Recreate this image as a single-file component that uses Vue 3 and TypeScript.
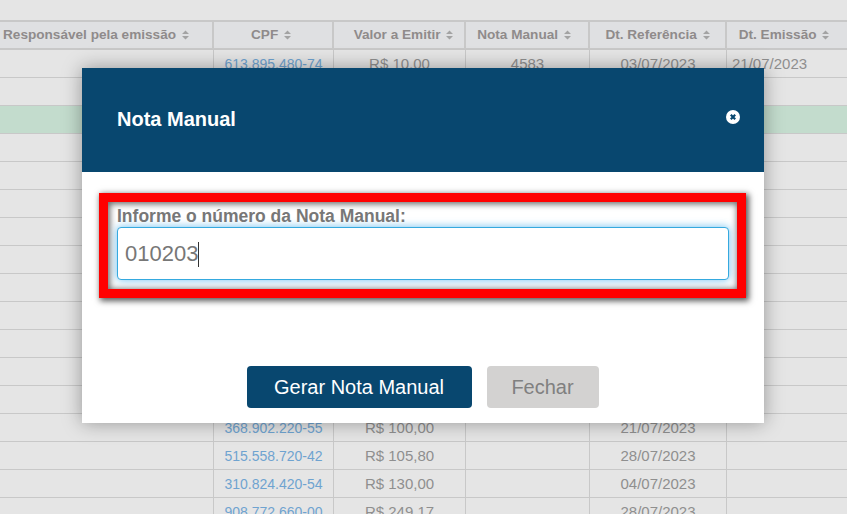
<script setup lang="ts">
interface Row {
  cpf: string
  valor: string
  nota: string
  ref: string
  emissao: string
  green?: boolean
}

const headers = ['Responsável pela emissão', 'CPF', 'Valor a Emitir', 'Nota Manual', 'Dt. Referência', 'Dt. Emissão']

const blank = (green = false): Row => ({ cpf: '', valor: '', nota: '', ref: '', emissao: '', green })

const rows: Row[] = [
  { cpf: '613.895.480-74', valor: 'R$ 10,00', nota: '4583', ref: '03/07/2023', emissao: '21/07/2023' },
  blank(),
  blank(true),
  ...Array.from({ length: 10 }, () => blank()),
  { cpf: '368.902.220-55', valor: 'R$ 100,00', nota: '', ref: '21/07/2023', emissao: '' },
  { cpf: '515.558.720-42', valor: 'R$ 105,80', nota: '', ref: '28/07/2023', emissao: '' },
  { cpf: '310.824.420-54', valor: 'R$ 130,00', nota: '', ref: '04/07/2023', emissao: '' },
  { cpf: '908.772.660-00', valor: 'R$ 249,17', nota: '', ref: '28/07/2023', emissao: '' }
]
</script>

<template>
  <div class="page">
    <table class="grid">
      <colgroup>
        <col class="c1" />
        <col class="c2" />
        <col class="c3" />
        <col class="c4" />
        <col class="c5" />
        <col class="c6" />
      </colgroup>
      <thead>
        <tr>
          <th v-for="h in headers" :key="h">
            {{ h }}
            <svg class="sort" width="7" height="10" viewBox="0 0 7 10">
              <path d="M3.5 0.5 7 4H0zM0 6h7L3.5 9.5z" fill="#a3a3a3" />
            </svg>
          </th>
        </tr>
      </thead>
      <tbody>
        <tr v-for="(r, i) in rows" :key="i" :class="{ green: r.green }">
          <td></td>
          <td class="link">{{ r.cpf }}</td>
          <td>{{ r.valor }}</td>
          <td>{{ r.nota }}</td>
          <td>{{ r.ref }}</td>
          <td class="left">{{ r.emissao }}</td>
        </tr>
      </tbody>
    </table>

    <div class="modal">
      <header class="modal-head">
        <h2 class="title">Nota Manual</h2>
        <svg class="close" width="14" height="14" viewBox="0 0 14 14">
          <circle cx="7" cy="7" r="7" fill="#fff" />
          <path d="M4.8 4.8 9.2 9.2M9.2 4.8 4.8 9.2" stroke="#08476f" stroke-width="2.2" />
        </svg>
      </header>
      <div class="modal-body">
        <div class="highlight">
          <label class="label">Informe o número da Nota Manual:</label>
          <div class="input">010203<span class="caret"></span></div>
        </div>
        <footer class="actions">
          <button class="btn primary">Gerar Nota Manual</button>
          <button class="btn muted">Fechar</button>
        </footer>
      </div>
    </div>
  </div>
</template>

<style>
html,
body {
  margin: 0;
  background: #e5e5e5;
}
</style>

<style scoped>
.page {
  position: relative;
  width: 847px;
  height: 514px;
  padding-top: 20px;
  box-sizing: border-box;
  overflow: hidden;
  background: #e5e5e5;
  font-family: "Liberation Sans", Arial, sans-serif;
}
.grid {
  width: 878px;
  table-layout: fixed;
  border-collapse: separate;
  border-spacing: 0;
  color: #8f8f8f;
  font-size: 15px;
}
.c1 { width: 214px; }
.c2 { width: 120px; }
.c3 { width: 132px; }
.c4 { width: 124px; }
.c5 { width: 137px; }
.c6 { width: 151px; }
th {
  height: 30px;
  padding: 0 0 1px;
  box-sizing: border-box;
  border-top: 2px solid #c8c8c8;
  border-bottom: 2px solid #c8c8c8;
  border-right: 2px solid #c8c8c8;
  background: #dfe0e2;
  font-size: 13.6px;
  font-weight: 700;
  text-align: center;
  white-space: nowrap;
  color: #8f8b8b;
}
th:nth-child(1) {
  padding-left: 3px;
  text-align: left;
}
th:nth-child(2) {
  padding-right: 4px;
}
th:nth-child(3) {
  padding-left: 9px;
}
th:nth-child(4) {
  padding-right: 6px;
}
th:nth-child(6) {
  padding-right: 35px;
}
.sort {
  margin-left: 2px;
  vertical-align: -1px;
}
td {
  height: 28px;
  padding: 0;
  box-sizing: border-box;
  border-bottom: 1px solid #c8c8c8;
  border-right: 1px solid #c8c8c8;
  text-align: center;
  white-space: nowrap;
}
td.left {
  padding-left: 5px;
  text-align: left;
}
td.link {
  padding-top: 1px;
  font-size: 14px;
  color: #6fa3d0;
}
.green td {
  background: #c3dccd;
}
.modal {
  position: absolute;
  left: 82px;
  top: 68px;
  width: 682px;
  height: 355px;
  display: flex;
  flex-direction: column;
  background: #fff;
  box-shadow: 0 0 18px rgba(0, 0, 0, 0.35);
}
.modal-head {
  height: 104px;
  flex: none;
  display: flex;
  align-items: center;
  justify-content: space-between;
  padding: 0 24px 0 35px;
  background: #08476f;
}
.title {
  margin: 0 0 2px;
  color: #fff;
  font-size: 20px;
  font-weight: 700;
}
.close {
  margin-bottom: 7px;
}
.modal-body {
  flex: 1;
  display: flex;
  flex-direction: column;
  padding: 21px 18px 15px 17px;
}
.highlight {
  height: 105px;
  box-sizing: border-box;
  padding: 4px 8px 0 9px;
  border: 9px solid #f00;
  box-shadow: 2px 2px 6px 1px rgba(0, 0, 0, 0.65), inset 1px 1px 6px 1px rgba(0, 0, 0, 0.6);
}
.label {
  display: block;
  height: 21px;
  color: #777;
  font-size: 17.5px;
  font-weight: 700;
  line-height: 21px;
}
.input {
  height: 53px;
  box-sizing: border-box;
  padding-left: 7px;
  border: 1px solid #35a9df;
  border-radius: 4px;
  box-shadow: 0 0 9px rgba(70, 175, 235, 0.8);
  background: #fff;
  color: #777;
  font-size: 22px;
  line-height: 51px;
}
.caret {
  display: inline-block;
  width: 1px;
  height: 25px;
  vertical-align: -6px;
  background: #333;
}
.actions {
  margin-top: auto;
  display: flex;
  justify-content: center;
  gap: 15px;
}
.btn {
  height: 42px;
  padding: 0;
  border: 0;
  border-radius: 4px;
  font-family: inherit;
  font-size: 20px;
}
.primary {
  width: 225px;
  background: #08476f;
  color: #fff;
}
.muted {
  width: 112px;
  background: #d3d2d1;
  color: #808080;
}
</style>
